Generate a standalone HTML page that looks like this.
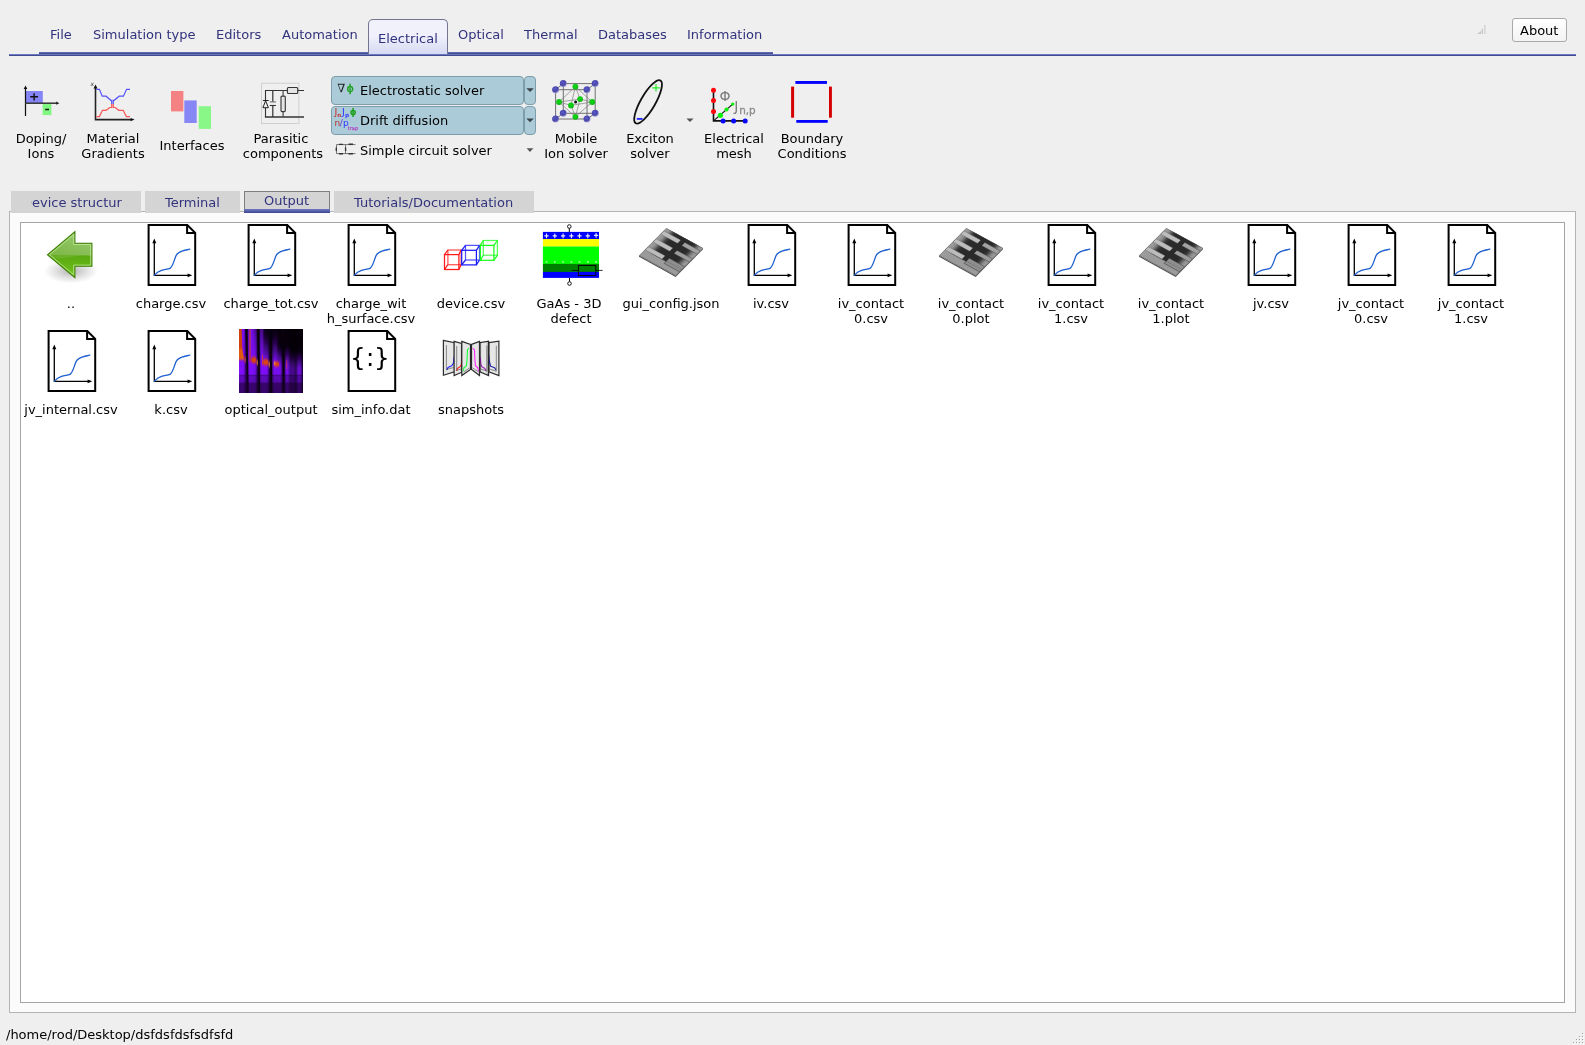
<!DOCTYPE html><html><head><meta charset="utf-8"><title>Simulation output</title><style>
html,body{margin:0;padding:0}
body{width:1585px;height:1045px;background:#efefef;position:relative;overflow:hidden;
 font-family:"DejaVu Sans","Liberation Sans",sans-serif;font-size:13px;color:#000;line-height:15px}
.a{position:absolute}
.t{position:absolute;white-space:nowrap;line-height:15px;will-change:transform}
.c{position:absolute;text-align:center;line-height:15px;white-space:nowrap;will-change:transform}
.rt{color:#32337d}
svg{position:absolute;overflow:visible;will-change:transform}
</style></head><body>
<div class="a" style="left:9px;top:54px;width:1567px;height:2px;background:linear-gradient(#6b77be 0,#6b77be 50%,#434b90 50%,#434b90 100%)"></div>
<div class="a" style="left:39px;top:52px;width:734px;height:2px;background:linear-gradient(#5e69b0 0,#5e69b0 50%,#464e93 50%,#464e93 100%)"></div>
<div class="t rt" style="left:50px;top:27px">File</div>
<div class="t rt" style="left:93px;top:27px">Simulation type</div>
<div class="t rt" style="left:216px;top:27px">Editors</div>
<div class="t rt" style="left:282px;top:27px">Automation</div>
<div class="t rt" style="left:458px;top:27px">Optical</div>
<div class="t rt" style="left:524px;top:27px">Thermal</div>
<div class="t rt" style="left:598px;top:27px">Databases</div>
<div class="t rt" style="left:687px;top:27px">Information</div>
<div class="a" style="left:368px;top:19px;width:78px;height:34px;border:1px solid #74748f;border-bottom:none;border-radius:5px 5px 0 0;background:linear-gradient(#f1f1fb 0%,#f1f1fd 45%,#d6d9f1 100%)"></div>
<div class="t rt" style="left:378px;top:31px">Electrical</div>
<div class="a" style="left:1512px;top:18px;width:53px;height:22px;border:1px solid #a9a9a9;border-radius:3px;background:linear-gradient(#ffffff,#f3f3f3)"></div>
<div class="t" style="left:1520px;top:23px">About</div>
<div class="c" style="left:-18.7px;width:120px;top:131px">Doping/</div>
<div class="c" style="left:-18.7px;width:120px;top:146px">Ions</div>
<div class="c" style="left:53.3px;width:120px;top:131px">Material</div>
<div class="c" style="left:53.3px;width:120px;top:146px">Gradients</div>
<div class="c" style="left:131.8px;width:120px;top:138px">Interfaces</div>
<div class="c" style="left:221.0px;width:120px;top:131px">Parasitic</div>
<div class="c" style="left:223.0px;width:120px;top:146px">components</div>
<div class="c" style="left:516.4px;width:120px;top:131px">Mobile</div>
<div class="c" style="left:516.4px;width:120px;top:146px">Ion solver</div>
<div class="c" style="left:589.7px;width:120px;top:131px">Exciton</div>
<div class="c" style="left:589.7px;width:120px;top:146px">solver</div>
<div class="c" style="left:673.6px;width:120px;top:131px">Electrical</div>
<div class="c" style="left:673.6px;width:120px;top:146px">mesh</div>
<div class="c" style="left:751.8px;width:120px;top:131px">Boundary</div>
<div class="c" style="left:751.8px;width:120px;top:146px">Conditions</div>
<div class="a" style="left:331px;top:76px;width:191px;height:27px;border:1px solid #7d9daa;border-radius:4px;background:#accbd8"></div>
<div class="a" style="left:524px;top:76px;width:10px;height:27px;border:1px solid #7d9daa;border-radius:4px;background:#accbd8"></div>
<div class="a" style="left:331px;top:106px;width:191px;height:27px;border:1px solid #7d9daa;border-radius:4px;background:#accbd8"></div>
<div class="a" style="left:524px;top:106px;width:10px;height:27px;border:1px solid #7d9daa;border-radius:4px;background:#accbd8"></div>
<div class="t" style="left:360px;top:83px">Electrostatic solver</div>
<div class="t" style="left:360px;top:113px">Drift diffusion</div>
<div class="t" style="left:360px;top:143px">Simple circuit solver</div>
<div class="a" style="left:9px;top:211px;width:1565px;height:800px;border:1px solid #b4b4b4;background:#fbfbfb"></div>
<div class="a" style="left:20px;top:222px;width:1543px;height:779px;border:1px solid #a5a5a5;background:#fff"></div>
<div class="a" style="left:11px;top:191px;width:130px;height:22px;background:#d4d4d4"></div>
<div class="a" style="left:145px;top:191px;width:95px;height:22px;background:#d4d4d4"></div>
<div class="a" style="left:334px;top:191px;width:200px;height:22px;background:#d4d4d4"></div>
<div class="a" style="left:244px;top:191px;width:84px;height:21px;border:1px solid #7f7f7f;border-bottom:none;background:#d4d4d4"></div>
<div class="a" style="left:244px;top:209px;width:86px;height:4px;background:linear-gradient(#6f7bc3,#3b4390)"></div>
<div class="a rt" style="left:31px;top:195px;width:91px;height:16px;overflow:hidden"><div class="t" style="left:-9.5px;top:0">Device structure</div></div>
<div class="t rt" style="left:165px;top:195px">Terminal</div>
<div class="t rt" style="left:264px;top:193px">Output</div>
<div class="t rt" style="left:354px;top:195px">Tutorials/Documentation</div>
<div class="c" style="left:11px;width:120px;top:296px">..</div>
<div class="c" style="left:111px;width:120px;top:296px">charge.csv</div>
<div class="c" style="left:211px;width:120px;top:296px">charge_tot.csv</div>
<div class="c" style="left:311px;width:120px;top:296px">charge_wit</div>
<div class="c" style="left:311px;width:120px;top:311px">h_surface.csv</div>
<div class="c" style="left:411px;width:120px;top:296px">device.csv</div>
<div class="c" style="left:509px;width:120px;top:296px">GaAs - 3D</div>
<div class="c" style="left:511px;width:120px;top:311px">defect</div>
<div class="c" style="left:611px;width:120px;top:296px">gui_config.json</div>
<div class="c" style="left:711px;width:120px;top:296px">iv.csv</div>
<div class="c" style="left:811px;width:120px;top:296px">iv_contact</div>
<div class="c" style="left:811px;width:120px;top:311px">0.csv</div>
<div class="c" style="left:911px;width:120px;top:296px">iv_contact</div>
<div class="c" style="left:911px;width:120px;top:311px">0.plot</div>
<div class="c" style="left:1011px;width:120px;top:296px">iv_contact</div>
<div class="c" style="left:1011px;width:120px;top:311px">1.csv</div>
<div class="c" style="left:1111px;width:120px;top:296px">iv_contact</div>
<div class="c" style="left:1111px;width:120px;top:311px">1.plot</div>
<div class="c" style="left:1211px;width:120px;top:296px">jv.csv</div>
<div class="c" style="left:1311px;width:120px;top:296px">jv_contact</div>
<div class="c" style="left:1311px;width:120px;top:311px">0.csv</div>
<div class="c" style="left:1411px;width:120px;top:296px">jv_contact</div>
<div class="c" style="left:1411px;width:120px;top:311px">1.csv</div>
<div class="c" style="left:11px;width:120px;top:402px">jv_internal.csv</div>
<div class="c" style="left:111px;width:120px;top:402px">k.csv</div>
<div class="c" style="left:211px;width:120px;top:402px">optical_output</div>
<div class="c" style="left:311px;width:120px;top:402px">sim_info.dat</div>
<div class="c" style="left:411px;width:120px;top:402px">snapshots</div>
<svg class="a" style="left:38px;top:223px" width="64" height="64" viewBox="0 0 64 64" ><defs><radialGradient id="bsh" cx="0.5" cy="0.5" r="0.5"><stop offset="0" stop-color="#000" stop-opacity="0.30"/><stop offset="0.55" stop-color="#000" stop-opacity="0.12"/><stop offset="1" stop-color="#000" stop-opacity="0"/></radialGradient><linearGradient id="bgr" x1="0" y1="0" x2="0" y2="1"><stop offset="0" stop-color="#86c258"/><stop offset="0.5" stop-color="#73b238"/><stop offset="0.52" stop-color="#5ba812"/><stop offset="1" stop-color="#70c41c"/></linearGradient><linearGradient id="bhl" x1="0" y1="0" x2="1" y2="0"><stop offset="0" stop-color="#fff" stop-opacity="0.06"/><stop offset="1" stop-color="#fff" stop-opacity="0.16"/></linearGradient></defs><ellipse cx="33" cy="48" rx="27" ry="12.5" fill="url(#bsh)"/><path d="M9.4 31.8L36.9 8.7V20.3H53.9V43.3H36.9V54.6Z" fill="url(#bgr)" stroke="#3a7d04" stroke-width="1.1" stroke-linejoin="miter"/><path d="M10.5 31.8L36.2 10.4V21H53.2V33.2C40 30.5 28 36.5 14.5 35.2Z" fill="url(#bhl)"/><path d="M11.6 31.8L35.7 11.6V21.5H52.7V42.1H35.7V51.7Z" fill="none" stroke="#c8eaa0" stroke-opacity="0.75" stroke-width="1"/></svg>
<svg class="a" style="left:138px;top:223px" width="64" height="64" viewBox="0 0 64 64" ><path d="M10.6 2H49.3L57.2 9.9V62H10.6Z" fill="#fff" stroke="#000" stroke-width="2" stroke-linejoin="miter"/><path d="M49.1 2V9.9H57.2" fill="none" stroke="#000" stroke-width="2"/><path d="M16.3 18.5V52.3H51" fill="none" stroke="#000" stroke-width="1.3"/><path d="M16.3 15.4L18.3 20.3H14.3Z M54.3 52.3L49.6 54.2V50.4Z" fill="#000"/><path d="M16.5 52.2C18.5 49.5 20.5 48.2 23.5 47.3C27 46.3 30 46.3 32 45.3C34.5 44 35.5 39 38 32.8C39.5 29.5 42 28.8 45 27.8C47.5 27 50 26.7 51.8 26.2" fill="none" stroke="#1d5fd1" stroke-width="1.3" stroke-linecap="round"/></svg>
<svg class="a" style="left:238px;top:223px" width="64" height="64" viewBox="0 0 64 64" ><path d="M10.6 2H49.3L57.2 9.9V62H10.6Z" fill="#fff" stroke="#000" stroke-width="2" stroke-linejoin="miter"/><path d="M49.1 2V9.9H57.2" fill="none" stroke="#000" stroke-width="2"/><path d="M16.3 18.5V52.3H51" fill="none" stroke="#000" stroke-width="1.3"/><path d="M16.3 15.4L18.3 20.3H14.3Z M54.3 52.3L49.6 54.2V50.4Z" fill="#000"/><path d="M16.5 52.2C18.5 49.5 20.5 48.2 23.5 47.3C27 46.3 30 46.3 32 45.3C34.5 44 35.5 39 38 32.8C39.5 29.5 42 28.8 45 27.8C47.5 27 50 26.7 51.8 26.2" fill="none" stroke="#1d5fd1" stroke-width="1.3" stroke-linecap="round"/></svg>
<svg class="a" style="left:338px;top:223px" width="64" height="64" viewBox="0 0 64 64" ><path d="M10.6 2H49.3L57.2 9.9V62H10.6Z" fill="#fff" stroke="#000" stroke-width="2" stroke-linejoin="miter"/><path d="M49.1 2V9.9H57.2" fill="none" stroke="#000" stroke-width="2"/><path d="M16.3 18.5V52.3H51" fill="none" stroke="#000" stroke-width="1.3"/><path d="M16.3 15.4L18.3 20.3H14.3Z M54.3 52.3L49.6 54.2V50.4Z" fill="#000"/><path d="M16.5 52.2C18.5 49.5 20.5 48.2 23.5 47.3C27 46.3 30 46.3 32 45.3C34.5 44 35.5 39 38 32.8C39.5 29.5 42 28.8 45 27.8C47.5 27 50 26.7 51.8 26.2" fill="none" stroke="#1d5fd1" stroke-width="1.3" stroke-linecap="round"/></svg>
<svg class="a" style="left:439px;top:223px" width="64" height="64" viewBox="0 0 64 64" ><g fill="none" stroke="#ff1a1a" stroke-width="1.25"><rect x="5.5" y="31.6" width="14.399999999999999" height="14.899999999999999"/><rect x="8.9" y="27" width="13.200000000000001" height="14.700000000000003" stroke-opacity="0.75"/><path d="M5.5 31.6L8.9 27"/><path d="M19.9 31.6L22.1 27"/><path d="M5.5 46.5L8.9 41.7"/><path d="M19.9 46.5L22.1 41.7"/></g><g fill="none" stroke="#1a1aff" stroke-width="1.25"><rect x="22.7" y="27.3" width="14.7" height="14.599999999999998"/><rect x="26.5" y="22.4" width="14.0" height="14.600000000000001" stroke-opacity="0.75"/><path d="M22.7 27.3L26.5 22.4"/><path d="M37.4 27.3L40.5 22.4"/><path d="M22.7 41.9L26.5 37"/><path d="M37.4 41.9L40.5 37"/></g><g fill="none" stroke="#1aff1a" stroke-width="1.25"><rect x="41.4" y="22.4" width="13.5" height="14.899999999999999"/><rect x="44.3" y="17.5" width="14.100000000000001" height="14.700000000000003" stroke-opacity="0.75"/><path d="M41.4 22.4L44.3 17.5"/><path d="M54.9 22.4L58.4 17.5"/><path d="M41.4 37.3L44.3 32.2"/><path d="M54.9 37.3L58.4 32.2"/></g></svg>
<svg class="a" style="left:539px;top:223px" width="64" height="64" viewBox="0 0 64 64" ><rect x="3.9" y="8.9" width="56.1" height="7.3" fill="#0000ff"/><rect x="3.9" y="16.0" width="56.1" height="7.7" fill="#ffff00"/><rect x="3.9" y="23.5" width="56.1" height="17.5" fill="#00ff00"/><rect x="3.9" y="40.9" width="56.1" height="8.1" fill="#008000"/><rect x="3.9" y="48.9" width="56.1" height="6.0" fill="#0000ff"/><path d="M5.4 12.9h4.2M7.5 10.6v4.6" stroke="#fff" stroke-width="1.1" stroke-opacity="0.92"/><rect x="6.7" y="38.3" width="1.6" height="1.3" fill="#fff" fill-opacity="0.85"/><path d="M13.7 12.9h4.2M15.8 10.6v4.6" stroke="#fff" stroke-width="1.1" stroke-opacity="0.92"/><rect x="15.0" y="38.3" width="1.6" height="1.3" fill="#fff" fill-opacity="0.85"/><path d="M22.0 12.9h4.2M24.1 10.6v4.6" stroke="#fff" stroke-width="1.1" stroke-opacity="0.92"/><rect x="23.3" y="38.3" width="1.6" height="1.3" fill="#fff" fill-opacity="0.85"/><path d="M30.3 12.9h4.2M32.4 10.6v4.6" stroke="#fff" stroke-width="1.1" stroke-opacity="0.92"/><rect x="31.6" y="38.3" width="1.6" height="1.3" fill="#fff" fill-opacity="0.85"/><path d="M38.4 12.9h4.2M40.5 10.6v4.6" stroke="#fff" stroke-width="1.1" stroke-opacity="0.92"/><rect x="39.7" y="38.3" width="1.6" height="1.3" fill="#fff" fill-opacity="0.85"/><path d="M46.7 12.9h4.2M48.8 10.6v4.6" stroke="#fff" stroke-width="1.1" stroke-opacity="0.92"/><rect x="48.0" y="38.3" width="1.6" height="1.3" fill="#fff" fill-opacity="0.85"/><path d="M55.0 12.4h4.2M57.1 10.1v4.6" stroke="#fff" stroke-width="1.1" stroke-opacity="0.92"/><rect x="56.3" y="38.3" width="1.6" height="1.3" fill="#fff" fill-opacity="0.85"/><circle cx="30.3" cy="3.5" r="1.8" fill="#fff" stroke="#000" stroke-width="0.9"/><path d="M30.3 5.4V9.0" stroke="#000" stroke-width="1"/><circle cx="30.5" cy="60.5" r="1.8" fill="#fff" stroke="#000" stroke-width="0.9"/><path d="M30.5 55.0V58.6" stroke="#000" stroke-width="1"/><rect x="39.4" y="42.5" width="17.4" height="10" fill="none" stroke="#000" stroke-width="0.9"/><path d="M32.5 47.4H39.4M56.8 47.4H63.6" stroke="#000" stroke-width="0.8"/></svg>
<svg class="a" style="left:639px;top:223px" width="64" height="64" viewBox="0 0 64 64" ><defs><filter id="cb1" x="-0.2" y="-0.2" width="1.4" height="1.4"><feGaussianBlur stdDeviation="0.05 0.004"/></filter><clipPath id="cc1"><rect x="0" y="0" width="1" height="1"/></clipPath></defs><path d="M-0.0 32.5L36.7 52.7L64.0 25.1v1.2L36.7 54.0L-0.0 33.7Z" fill="#505050"/><g transform="matrix(36.7 20.2 -27.3 27.6 27.3 4.9)"><g clip-path="url(#cc1)"><rect x="0" y="0" width="1" height="1" fill="#9b9b9b"/><rect x="0.17" y="-0.05" width="0.69" height="0.845" fill="#2c2c2c" filter="url(#cb1)"/><rect x="0.012" y="0.101" width="0.455" height="0.118" rx="0.014" fill="#bcbcbc" stroke="#555" stroke-width="0.008"/><rect x="0.012" y="0.386" width="0.455" height="0.118" rx="0.014" fill="#bcbcbc" stroke="#555" stroke-width="0.008"/><rect x="0.012" y="0.671" width="0.455" height="0.118" rx="0.014" fill="#bcbcbc" stroke="#555" stroke-width="0.008"/><rect x="0.585" y="0.10300000000000001" width="0.43" height="0.114" fill="#a2a2a2"/><path d="M0.585 0.10300000000000001H1M0.585 0.217H1" stroke="#3a3a3a" stroke-width="0.01" fill="none"/><rect x="0.585" y="0.388" width="0.43" height="0.114" fill="#9c9c9c"/><path d="M0.585 0.388H1M0.585 0.502H1" stroke="#3a3a3a" stroke-width="0.01" fill="none"/><rect x="0.585" y="0.673" width="0.43" height="0.114" fill="#8e8e8e"/><path d="M0.585 0.673H1M0.585 0.787H1" stroke="#3a3a3a" stroke-width="0.01" fill="none"/><rect x="0.58" y="0.78" width="0.44" height="0.08" fill="#8e8e8e"/><path d="M0.58 0.86V0.775M0.58 0.86H1" stroke="#3a3a3a" stroke-width="0.012" fill="none"/><rect x="0" y="0" width="1" height="1" fill="none" stroke="#4a4a4a" stroke-width="0.02"/></g></g></svg>
<svg class="a" style="left:738px;top:223px" width="64" height="64" viewBox="0 0 64 64" ><path d="M10.6 2H49.3L57.2 9.9V62H10.6Z" fill="#fff" stroke="#000" stroke-width="2" stroke-linejoin="miter"/><path d="M49.1 2V9.9H57.2" fill="none" stroke="#000" stroke-width="2"/><path d="M16.3 18.5V52.3H51" fill="none" stroke="#000" stroke-width="1.3"/><path d="M16.3 15.4L18.3 20.3H14.3Z M54.3 52.3L49.6 54.2V50.4Z" fill="#000"/><path d="M16.5 52.2C18.5 49.5 20.5 48.2 23.5 47.3C27 46.3 30 46.3 32 45.3C34.5 44 35.5 39 38 32.8C39.5 29.5 42 28.8 45 27.8C47.5 27 50 26.7 51.8 26.2" fill="none" stroke="#1d5fd1" stroke-width="1.3" stroke-linecap="round"/></svg>
<svg class="a" style="left:838px;top:223px" width="64" height="64" viewBox="0 0 64 64" ><path d="M10.6 2H49.3L57.2 9.9V62H10.6Z" fill="#fff" stroke="#000" stroke-width="2" stroke-linejoin="miter"/><path d="M49.1 2V9.9H57.2" fill="none" stroke="#000" stroke-width="2"/><path d="M16.3 18.5V52.3H51" fill="none" stroke="#000" stroke-width="1.3"/><path d="M16.3 15.4L18.3 20.3H14.3Z M54.3 52.3L49.6 54.2V50.4Z" fill="#000"/><path d="M16.5 52.2C18.5 49.5 20.5 48.2 23.5 47.3C27 46.3 30 46.3 32 45.3C34.5 44 35.5 39 38 32.8C39.5 29.5 42 28.8 45 27.8C47.5 27 50 26.7 51.8 26.2" fill="none" stroke="#1d5fd1" stroke-width="1.3" stroke-linecap="round"/></svg>
<svg class="a" style="left:939px;top:223px" width="64" height="64" viewBox="0 0 64 64" ><defs><filter id="cb2" x="-0.2" y="-0.2" width="1.4" height="1.4"><feGaussianBlur stdDeviation="0.05 0.004"/></filter><clipPath id="cc2"><rect x="0" y="0" width="1" height="1"/></clipPath></defs><path d="M-0.0 32.5L36.7 52.7L64.0 25.1v1.2L36.7 54.0L-0.0 33.7Z" fill="#505050"/><g transform="matrix(36.7 20.2 -27.3 27.6 27.3 4.9)"><g clip-path="url(#cc2)"><rect x="0" y="0" width="1" height="1" fill="#9b9b9b"/><rect x="0.17" y="-0.05" width="0.69" height="0.845" fill="#2c2c2c" filter="url(#cb2)"/><rect x="0.012" y="0.101" width="0.455" height="0.118" rx="0.014" fill="#bcbcbc" stroke="#555" stroke-width="0.008"/><rect x="0.012" y="0.386" width="0.455" height="0.118" rx="0.014" fill="#bcbcbc" stroke="#555" stroke-width="0.008"/><rect x="0.012" y="0.671" width="0.455" height="0.118" rx="0.014" fill="#bcbcbc" stroke="#555" stroke-width="0.008"/><rect x="0.585" y="0.10300000000000001" width="0.43" height="0.114" fill="#a2a2a2"/><path d="M0.585 0.10300000000000001H1M0.585 0.217H1" stroke="#3a3a3a" stroke-width="0.01" fill="none"/><rect x="0.585" y="0.388" width="0.43" height="0.114" fill="#9c9c9c"/><path d="M0.585 0.388H1M0.585 0.502H1" stroke="#3a3a3a" stroke-width="0.01" fill="none"/><rect x="0.585" y="0.673" width="0.43" height="0.114" fill="#8e8e8e"/><path d="M0.585 0.673H1M0.585 0.787H1" stroke="#3a3a3a" stroke-width="0.01" fill="none"/><rect x="0.58" y="0.78" width="0.44" height="0.08" fill="#8e8e8e"/><path d="M0.58 0.86V0.775M0.58 0.86H1" stroke="#3a3a3a" stroke-width="0.012" fill="none"/><rect x="0" y="0" width="1" height="1" fill="none" stroke="#4a4a4a" stroke-width="0.02"/></g></g></svg>
<svg class="a" style="left:1038px;top:223px" width="64" height="64" viewBox="0 0 64 64" ><path d="M10.6 2H49.3L57.2 9.9V62H10.6Z" fill="#fff" stroke="#000" stroke-width="2" stroke-linejoin="miter"/><path d="M49.1 2V9.9H57.2" fill="none" stroke="#000" stroke-width="2"/><path d="M16.3 18.5V52.3H51" fill="none" stroke="#000" stroke-width="1.3"/><path d="M16.3 15.4L18.3 20.3H14.3Z M54.3 52.3L49.6 54.2V50.4Z" fill="#000"/><path d="M16.5 52.2C18.5 49.5 20.5 48.2 23.5 47.3C27 46.3 30 46.3 32 45.3C34.5 44 35.5 39 38 32.8C39.5 29.5 42 28.8 45 27.8C47.5 27 50 26.7 51.8 26.2" fill="none" stroke="#1d5fd1" stroke-width="1.3" stroke-linecap="round"/></svg>
<svg class="a" style="left:1139px;top:223px" width="64" height="64" viewBox="0 0 64 64" ><defs><filter id="cb3" x="-0.2" y="-0.2" width="1.4" height="1.4"><feGaussianBlur stdDeviation="0.05 0.004"/></filter><clipPath id="cc3"><rect x="0" y="0" width="1" height="1"/></clipPath></defs><path d="M-0.0 32.5L36.7 52.7L64.0 25.1v1.2L36.7 54.0L-0.0 33.7Z" fill="#505050"/><g transform="matrix(36.7 20.2 -27.3 27.6 27.3 4.9)"><g clip-path="url(#cc3)"><rect x="0" y="0" width="1" height="1" fill="#9b9b9b"/><rect x="0.17" y="-0.05" width="0.69" height="0.845" fill="#2c2c2c" filter="url(#cb3)"/><rect x="0.012" y="0.101" width="0.455" height="0.118" rx="0.014" fill="#bcbcbc" stroke="#555" stroke-width="0.008"/><rect x="0.012" y="0.386" width="0.455" height="0.118" rx="0.014" fill="#bcbcbc" stroke="#555" stroke-width="0.008"/><rect x="0.012" y="0.671" width="0.455" height="0.118" rx="0.014" fill="#bcbcbc" stroke="#555" stroke-width="0.008"/><rect x="0.585" y="0.10300000000000001" width="0.43" height="0.114" fill="#a2a2a2"/><path d="M0.585 0.10300000000000001H1M0.585 0.217H1" stroke="#3a3a3a" stroke-width="0.01" fill="none"/><rect x="0.585" y="0.388" width="0.43" height="0.114" fill="#9c9c9c"/><path d="M0.585 0.388H1M0.585 0.502H1" stroke="#3a3a3a" stroke-width="0.01" fill="none"/><rect x="0.585" y="0.673" width="0.43" height="0.114" fill="#8e8e8e"/><path d="M0.585 0.673H1M0.585 0.787H1" stroke="#3a3a3a" stroke-width="0.01" fill="none"/><rect x="0.58" y="0.78" width="0.44" height="0.08" fill="#8e8e8e"/><path d="M0.58 0.86V0.775M0.58 0.86H1" stroke="#3a3a3a" stroke-width="0.012" fill="none"/><rect x="0" y="0" width="1" height="1" fill="none" stroke="#4a4a4a" stroke-width="0.02"/></g></g></svg>
<svg class="a" style="left:1238px;top:223px" width="64" height="64" viewBox="0 0 64 64" ><path d="M10.6 2H49.3L57.2 9.9V62H10.6Z" fill="#fff" stroke="#000" stroke-width="2" stroke-linejoin="miter"/><path d="M49.1 2V9.9H57.2" fill="none" stroke="#000" stroke-width="2"/><path d="M16.3 18.5V52.3H51" fill="none" stroke="#000" stroke-width="1.3"/><path d="M16.3 15.4L18.3 20.3H14.3Z M54.3 52.3L49.6 54.2V50.4Z" fill="#000"/><path d="M16.5 52.2C18.5 49.5 20.5 48.2 23.5 47.3C27 46.3 30 46.3 32 45.3C34.5 44 35.5 39 38 32.8C39.5 29.5 42 28.8 45 27.8C47.5 27 50 26.7 51.8 26.2" fill="none" stroke="#1d5fd1" stroke-width="1.3" stroke-linecap="round"/></svg>
<svg class="a" style="left:1338px;top:223px" width="64" height="64" viewBox="0 0 64 64" ><path d="M10.6 2H49.3L57.2 9.9V62H10.6Z" fill="#fff" stroke="#000" stroke-width="2" stroke-linejoin="miter"/><path d="M49.1 2V9.9H57.2" fill="none" stroke="#000" stroke-width="2"/><path d="M16.3 18.5V52.3H51" fill="none" stroke="#000" stroke-width="1.3"/><path d="M16.3 15.4L18.3 20.3H14.3Z M54.3 52.3L49.6 54.2V50.4Z" fill="#000"/><path d="M16.5 52.2C18.5 49.5 20.5 48.2 23.5 47.3C27 46.3 30 46.3 32 45.3C34.5 44 35.5 39 38 32.8C39.5 29.5 42 28.8 45 27.8C47.5 27 50 26.7 51.8 26.2" fill="none" stroke="#1d5fd1" stroke-width="1.3" stroke-linecap="round"/></svg>
<svg class="a" style="left:1438px;top:223px" width="64" height="64" viewBox="0 0 64 64" ><path d="M10.6 2H49.3L57.2 9.9V62H10.6Z" fill="#fff" stroke="#000" stroke-width="2" stroke-linejoin="miter"/><path d="M49.1 2V9.9H57.2" fill="none" stroke="#000" stroke-width="2"/><path d="M16.3 18.5V52.3H51" fill="none" stroke="#000" stroke-width="1.3"/><path d="M16.3 15.4L18.3 20.3H14.3Z M54.3 52.3L49.6 54.2V50.4Z" fill="#000"/><path d="M16.5 52.2C18.5 49.5 20.5 48.2 23.5 47.3C27 46.3 30 46.3 32 45.3C34.5 44 35.5 39 38 32.8C39.5 29.5 42 28.8 45 27.8C47.5 27 50 26.7 51.8 26.2" fill="none" stroke="#1d5fd1" stroke-width="1.3" stroke-linecap="round"/></svg>
<svg class="a" style="left:38px;top:329px" width="64" height="64" viewBox="0 0 64 64" ><path d="M10.6 2H49.3L57.2 9.9V62H10.6Z" fill="#fff" stroke="#000" stroke-width="2" stroke-linejoin="miter"/><path d="M49.1 2V9.9H57.2" fill="none" stroke="#000" stroke-width="2"/><path d="M16.3 18.5V52.3H51" fill="none" stroke="#000" stroke-width="1.3"/><path d="M16.3 15.4L18.3 20.3H14.3Z M54.3 52.3L49.6 54.2V50.4Z" fill="#000"/><path d="M16.5 52.2C18.5 49.5 20.5 48.2 23.5 47.3C27 46.3 30 46.3 32 45.3C34.5 44 35.5 39 38 32.8C39.5 29.5 42 28.8 45 27.8C47.5 27 50 26.7 51.8 26.2" fill="none" stroke="#1d5fd1" stroke-width="1.3" stroke-linecap="round"/></svg>
<svg class="a" style="left:138px;top:329px" width="64" height="64" viewBox="0 0 64 64" ><path d="M10.6 2H49.3L57.2 9.9V62H10.6Z" fill="#fff" stroke="#000" stroke-width="2" stroke-linejoin="miter"/><path d="M49.1 2V9.9H57.2" fill="none" stroke="#000" stroke-width="2"/><path d="M16.3 18.5V52.3H51" fill="none" stroke="#000" stroke-width="1.3"/><path d="M16.3 15.4L18.3 20.3H14.3Z M54.3 52.3L49.6 54.2V50.4Z" fill="#000"/><path d="M16.5 52.2C18.5 49.5 20.5 48.2 23.5 47.3C27 46.3 30 46.3 32 45.3C34.5 44 35.5 39 38 32.8C39.5 29.5 42 28.8 45 27.8C47.5 27 50 26.7 51.8 26.2" fill="none" stroke="#1d5fd1" stroke-width="1.3" stroke-linecap="round"/></svg>
<svg class="a" style="left:239px;top:329px" width="64" height="64" viewBox="0 0 64 64" ><defs><filter id="ob1" x="-0.3" y="-0.1" width="1.6" height="1.2"><feGaussianBlur stdDeviation="0.9 1.6"/></filter><filter id="ob2" x="-0.5" y="-0.5" width="2" height="2"><feGaussianBlur stdDeviation="0.7 0.9"/></filter><filter id="ob3" x="-0.5" y="-0.2" width="2" height="1.4"><feGaussianBlur stdDeviation="0.45 0.8"/></filter><linearGradient id="ovA" x1="0" y1="0" x2="0" y2="1"><stop offset="0" stop-color="#8010ff" stop-opacity="0.95"/><stop offset="0.7" stop-color="#8010ff" stop-opacity="1"/><stop offset="1" stop-color="#8010ff" stop-opacity="0.9"/></linearGradient><linearGradient id="ovB" x1="0" y1="0" x2="0" y2="1"><stop offset="0" stop-color="#8010ff" stop-opacity="0.55"/><stop offset="0.25" stop-color="#8010ff" stop-opacity="0.85"/><stop offset="0.5" stop-color="#8010ff" stop-opacity="1"/><stop offset="1" stop-color="#8010ff" stop-opacity="0.9"/></linearGradient><linearGradient id="ovC" x1="0" y1="0" x2="0" y2="1"><stop offset="0" stop-color="#8010ff" stop-opacity="0.0"/><stop offset="0.15" stop-color="#8010ff" stop-opacity="0.1"/><stop offset="0.38" stop-color="#8010ff" stop-opacity="0.6"/><stop offset="0.52" stop-color="#8010ff" stop-opacity="1"/><stop offset="0.7" stop-color="#8010ff" stop-opacity="0.95"/><stop offset="1" stop-color="#8010ff" stop-opacity="0.85"/></linearGradient><linearGradient id="ovD" x1="0" y1="0" x2="0" y2="1"><stop offset="0" stop-color="#8010ff" stop-opacity="0.0"/><stop offset="0.3" stop-color="#8010ff" stop-opacity="0.03"/><stop offset="0.45" stop-color="#8010ff" stop-opacity="0.5"/><stop offset="0.56" stop-color="#8010ff" stop-opacity="0.95"/><stop offset="0.7" stop-color="#8010ff" stop-opacity="0.95"/><stop offset="1" stop-color="#8010ff" stop-opacity="0.85"/></linearGradient><linearGradient id="ovE" x1="0" y1="0" x2="0" y2="1"><stop offset="0" stop-color="#8010ff" stop-opacity="0.0"/><stop offset="0.36" stop-color="#8010ff" stop-opacity="0.0"/><stop offset="0.5" stop-color="#8010ff" stop-opacity="0.45"/><stop offset="0.6" stop-color="#8010ff" stop-opacity="0.85"/><stop offset="0.72" stop-color="#8010ff" stop-opacity="0.85"/><stop offset="1" stop-color="#8010ff" stop-opacity="0.8"/></linearGradient><clipPath id="ocl"><rect x="0" y="0" width="64" height="64"/></clipPath></defs><g clip-path="url(#ocl)"><rect width="64" height="64" fill="#050008"/><g filter="url(#ob1)"><rect x="-2" y="-4" width="8.3" height="72" fill="url(#ovA)"/><rect x="8.6" y="-4" width="5.8" height="72" fill="url(#ovA)"/><rect x="14.2" y="-4" width="3.6" height="72" fill="url(#ovB)"/><rect x="20.6" y="-4" width="3.6" height="72" fill="url(#ovB)"/><rect x="24" y="-4" width="5.8" height="72" fill="url(#ovC)"/><rect x="33.3" y="-4" width="5.2" height="72" fill="url(#ovC)"/><rect x="38.3" y="-4" width="4.6" height="72" fill="url(#ovD)"/><rect x="45.8" y="-4" width="5" height="72" fill="url(#ovD)"/><rect x="57.3" y="-4" width="5.6" height="72" fill="url(#ovE)"/><rect x="51.5" y="-4" width="4.5" height="72" fill="url(#ovE)"/></g><rect x="50.5" y="0" width="7" height="64" fill="#050008" fill-opacity="0.3" filter="url(#ob1)"/><g filter="url(#ob3)"><path d="M-1 -2H2.6L3.4 22L5.2 30.5H-1Z" fill="#d04008"/><path d="M-1 20H3.2L5 30.8H-1Z" fill="#e45a08"/><rect x="10.4" y="-2" width="1.2" height="35" fill="#c8302a"/><rect x="5.6" y="28" width="1" height="5.5" fill="#e05010"/><rect x="23" y="26" width="0.9" height="10" fill="#d84020"/><rect x="47.2" y="31" width="1" height="9" fill="#c03050" fill-opacity="0.85"/></g><g filter="url(#ob2)"><ellipse cx="14.8" cy="31" rx="2.6" ry="3.3" fill="#d84008"/><ellipse cx="26.8" cy="33.2" rx="2.7" ry="3.2" fill="#dc4408"/><ellipse cx="37.8" cy="35" rx="2.6" ry="2.6" fill="#e04a08"/><ellipse cx="18.2" cy="33.5" rx="0.55" ry="3" fill="#ff8a10"/><ellipse cx="30.2" cy="35.5" rx="0.55" ry="3.3" fill="#ff9410"/><ellipse cx="35.6" cy="34.3" rx="0.8" ry="1.8" fill="#ff9a18"/></g><g filter="url(#ob3)" fill="#0a0010"><path d="M6.3 -2H8.5L9.6 66H8.5Z"/><path d="M17.9 -2H20.3L21.2 66H20Z"/><path d="M30.3 -2H32.5L33.3 66H32.2Z"/><path d="M43.1 -2H45.3L45.5 66H44.3Z"/></g><rect x="0" y="45.8" width="64" height="0.9" fill="#18002c" fill-opacity="0.55"/><rect x="0" y="46.7" width="64" height="7" fill="#18002c" fill-opacity="0.3"/><rect x="0" y="53.6" width="64" height="11" fill="#14001e" fill-opacity="0.62"/></g></svg>
<svg class="a" style="left:338px;top:329px" width="64" height="64" viewBox="0 0 64 64" ><path d="M10.6 2H49.3L57.2 9.9V62H10.6Z" fill="#fff" stroke="#000" stroke-width="2"/><path d="M49.1 2V9.9H57.2" fill="none" stroke="#000" stroke-width="2"/><text x="12" y="36.5" font-family="DejaVu Sans,Liberation Sans,sans-serif" font-size="24.6" fill="#000">{</text><text x="28" y="37.1" font-family="DejaVu Sans,Liberation Sans,sans-serif" font-size="24.6" fill="#000">:</text><text x="36.1" y="36.5" font-family="DejaVu Sans,Liberation Sans,sans-serif" font-size="24.6" fill="#000">}</text></svg>
<svg class="a" style="left:439px;top:329px" width="64" height="64" viewBox="0 0 64 64" ><polygon points="4.4,11.4 15.4,13.7 15.4,42.9 4.4,46.2" fill="#e6e6e6" stroke="#2e2e2e" stroke-width="1.2" stroke-linejoin="miter"/><polyline points="7.7,40.9 9.0,38.5 12.7,36.8 14.4,34.2 15.1,27.5" fill="none" stroke="#2020ff" stroke-width="1.15" stroke-linejoin="round"/><polygon points="15.1,12.4 22.8,14.4 22.8,43.2 15.1,46.6" fill="#e6e6e6" stroke="#2e2e2e" stroke-width="1.2" stroke-linejoin="miter"/><polyline points="17.4,41.9 18.4,39.5 21.1,37.8 22.4,35.5 22.8,28.1" fill="none" stroke="#ff2020" stroke-width="1.15" stroke-linejoin="round"/><polygon points="22.8,12.4 31.5,15.4 31.5,40.5 22.8,46.6" fill="#e6e6e6" stroke="#2e2e2e" stroke-width="1.2" stroke-linejoin="miter"/><polyline points="24.4,42.2 24.9,38.8 27.5,36.8 28.1,29.5 28.5,20.8 29.8,19.1" fill="none" stroke="#20ff40" stroke-width="1.15" stroke-linejoin="round"/><polygon points="49.9,13.7 59.9,12.1 59.9,46.6 49.9,42.9" fill="#e6e6e6" stroke="#2e2e2e" stroke-width="1.2" stroke-linejoin="miter"/><polyline points="56.9,40.9 55.6,38.8 51.6,37.2 50.6,33.5 49.2,22.8" fill="none" stroke="#2020a0" stroke-width="1.15" stroke-linejoin="round"/><polygon points="40.9,13.7 49.6,12.1 49.6,46.6 40.9,42.9" fill="#e6e6e6" stroke="#2e2e2e" stroke-width="1.2" stroke-linejoin="miter"/><polyline points="46.9,41.9 45.9,39.5 42.9,37.8 41.9,35.5 41.2,28.1" fill="none" stroke="#a020c0" stroke-width="1.15" stroke-linejoin="round"/><polygon points="32.5,15.4 40.5,12.4 40.5,46.6 32.5,40.5" fill="#e6e6e6" stroke="#2e2e2e" stroke-width="1.2" stroke-linejoin="miter"/><polyline points="39.5,42.2 38.8,38.8 36.5,36.8 35.8,29.5 35.5,20.8 33.8,19.1" fill="none" stroke="#ff30ff" stroke-width="1.15" stroke-linejoin="round"/><polyline points="7.4,16.1 7.4,40.5 14.7,38.5" fill="none" stroke="#444" stroke-width="0.6"/><polyline points="17.7,17.1 17.7,41.5 22.4,39.9" fill="none" stroke="#444" stroke-width="0.6"/><polyline points="24.8,42.9 30.8,38.8" fill="none" stroke="#444" stroke-width="0.6"/><polyline points="33.5,38.8 39.5,42.9" fill="none" stroke="#444" stroke-width="0.6"/><polyline points="47.9,16.7 47.9,42.2 41.5,39.9" fill="none" stroke="#444" stroke-width="0.6"/><polyline points="57.3,16.7 57.3,42.2 50.2,39.9" fill="none" stroke="#444" stroke-width="0.6"/><polygon points="21.8,14.4 22.8,14.4 22.8,43.2 21.8,42.9" fill="#000" fill-opacity="0.25"/><polygon points="40.9,13.7 42.2,13.5 42.2,43.4 40.9,42.9" fill="#000" fill-opacity="0.22"/><polygon points="47.6,12.5 49.6,12.1 49.6,46.6 47.6,45.7" fill="#000" fill-opacity="0.2"/><polygon points="31.5,15.4 32.5,15.4 32.5,40.5 31.5,40.5" fill="#222"/></svg>
<svg class="a" style="left:0;top:0;pointer-events:none" width="1585" height="1045" viewBox="0 0 1585 1045"><defs><radialGradient id="sb" cx="0.4" cy="0.35" r="0.75"><stop offset="0" stop-color="#5a5ac8"/><stop offset="0.55" stop-color="#4a46a8"/><stop offset="1" stop-color="#c8c8e8"/></radialGradient><radialGradient id="sg" cx="0.45" cy="0.4" r="0.7"><stop offset="0" stop-color="#10d818"/><stop offset="0.7" stop-color="#0cc010"/><stop offset="1" stop-color="#089808"/></radialGradient></defs><rect x="26" y="91" width="16.8" height="12" fill="#8585f7"/><rect x="42.6" y="103.6" width="8.8" height="11.5" fill="#80f780"/><path d="M25.5 87.5V116" stroke="#111" stroke-width="1.25"/><path d="M25.5 85.4L27.3 89H23.7Z" fill="#111"/><path d="M25 103.2H57" stroke="#333" stroke-width="1.5"/><path d="M59.4 103.2L56.2 104.8V101.6Z" fill="#222"/><path d="M30.2 96.8H38M34.1 93.2V100.6" stroke="#111" stroke-width="1.4"/><path d="M45.2 109.5H49" stroke="#111" stroke-width="1.5"/><path d="M95.5 88V119.6H131" stroke="#222" stroke-width="1.6" fill="none"/><path d="M95.5 84.4L97.5 88.6H93.5Z M134.6 119.6L130.6 121.3V117.9Z" fill="#111"/><text x="90.6" y="86.2" font-family="DejaVu Sans,Liberation Sans,sans-serif" font-size="6" font-style="italic" fill="#333">x</text><path d="M96.3 89.3H99.4L102.2 96.2H106L110.8 100.3H111.7V103.9M113.3 103.9V100.3H114.2L119.2 96.2H123.4L126.6 89.3H130" fill="none" stroke="#5555f8" stroke-width="1.2"/><path d="M96.3 116.6H99.4L102.4 110.3H106L109.8 107.5H111.7V104.1M113.3 104.1V107.5H115.2L118.8 110.3H123.2L126.4 116.6H130" fill="none" stroke="#f85555" stroke-width="1.2"/><rect x="171" y="91" width="12.4" height="20.4" fill="#f58282"/><rect x="184.3" y="100.4" width="12.4" height="22.6" fill="#8686f5"/><rect x="198.7" y="106.2" width="12.3" height="22.7" fill="#88f788"/><rect x="261.5" y="83.2" width="37.4" height="40.3" fill="none" stroke="#cfcfcf" stroke-width="1"/><path d="M265.5 100.5V90.5H287.4M297.7 90.5H304M265.5 107.9V117.1" fill="none" stroke="#333" stroke-width="1.1"/><path d="M264.9 117.1H304" stroke="#333" stroke-width="1.5"/><rect x="287.4" y="87.5" width="10.3" height="6" rx="1" fill="#e4e4e4" stroke="#333" stroke-width="1.1"/><rect x="281" y="96.1" width="4.3" height="15.5" rx="1" fill="#e4e4e4" stroke="#333" stroke-width="1.1"/><path d="M283.1 90.5V96.1M283.1 111.6V117.1" stroke="#555" stroke-width="1.3"/><path d="M272.8 90.5V101.9M272.8 105.5V117.1" stroke="#333" stroke-width="1.2"/><path d="M269.8 101.9H275.9" stroke="#777" stroke-width="1.2"/><path d="M269.8 105.5H275.9" stroke="#333" stroke-width="1.1"/><path d="M262.9 100.5H268.7" stroke="#222" stroke-width="1"/><path d="M265.6 100.8L268.4 107.7H262.9Z" fill="#efefef" stroke="#222" stroke-width="1"/><path d="M526.3 88.3H533.8L530.05 92.1Z M526.3 118.4H533.8L530.05 122.2Z" fill="#3a474d"/><path d="M526.6 148.3H533.4L530 152.1Z M686.4 118.4H693.6L690 122.1Z" fill="#555"/><text x="337.2" y="92.3" font-family="DejaVu Serif,Liberation Serif,serif" font-style="italic" font-size="11.5" fill="#222">∇</text><text x="346.4" y="91.8" font-family="DejaVu Sans,Liberation Sans,sans-serif" font-size="11" fill="#18a018" stroke="#18a018" stroke-width="0.35">ϕ</text><text x="334.6" y="115.4" font-family="DejaVu Sans,Liberation Sans,sans-serif" font-size="9.5" fill="#c43030">J</text><text x="337.3" y="117.4" font-family="DejaVu Sans,Liberation Sans,sans-serif" font-size="5.6" font-weight="bold" fill="#c43030">n</text><text x="342" y="115.4" font-family="DejaVu Sans,Liberation Sans,sans-serif" font-size="9.5" fill="#3030ff">J</text><text x="344.9" y="117.4" font-family="DejaVu Sans,Liberation Sans,sans-serif" font-size="5.6" font-weight="bold" fill="#3030ff">p</text><text x="349.8" y="115.2" font-family="DejaVu Sans,Liberation Sans,sans-serif" font-weight="bold" font-size="8.5" fill="#18a018">ϕ</text><text x="334.4" y="126.2" font-family="DejaVu Sans,Liberation Sans,sans-serif" font-size="9" fill="#b83030">n</text><text x="339.8" y="126.2" font-family="DejaVu Sans,Liberation Sans,sans-serif" font-size="9" fill="#6a38c8">/</text><text x="343" y="126.2" font-family="DejaVu Sans,Liberation Sans,sans-serif" font-size="9" fill="#3030ff">p</text><text x="347.8" y="129.6" font-family="DejaVu Sans,Liberation Sans,sans-serif" font-size="5" fill="#b030c0" stroke="#b030c0" stroke-width="0.15">trap</text><path d="M336.5 144.6H355.5M336.5 153.6H355.5M336.5 144.6V153.6M345.5 144.6V153.6" fill="none" stroke="#555" stroke-width="0.8"/><path d="M339 144.4H343M348.5 144.2H353M339 153.7H343M348.5 153.7H353M336.3 147.5V151M345.6 147.5V151" stroke="#333" stroke-width="1.4"/><g fill="none" stroke="#707070" stroke-width="1"><path d="M555.6 89.7H587V119H555.6Z M563.3 83.6H595.2V113.3H563.3Z"/><path d="M555.6 89.7L563.3 83.6"/><path d="M587 89.7L595.2 83.6"/><path d="M587 119L595.2 113.3"/><path d="M555.6 119L563.3 113.3"/></g><g fill="none" stroke="#808080" stroke-width="0.7"><path d="M575.4 86.6L559 102"/><path d="M575.4 86.6L592.2 102"/><path d="M575.4 86.6L571 105.4"/><path d="M575.4 86.6L580.1 99.1"/><path d="M575.4 116.8L559 102"/><path d="M575.4 116.8L592.2 102"/><path d="M575.4 116.8L571 105.4"/><path d="M575.4 116.8L580.1 99.1"/><path d="M559 102L571 105.4"/><path d="M571 105.4L592.2 102"/><path d="M592.2 102L580.1 99.1"/><path d="M580.1 99.1L559 102"/></g><circle cx="563.3" cy="83.6" r="3.5" fill="url(#sb)"/><circle cx="595.2" cy="83.6" r="3.5" fill="url(#sb)"/><circle cx="595.2" cy="113.3" r="3.5" fill="url(#sb)"/><circle cx="563.3" cy="113.3" r="3.5" fill="url(#sb)"/><circle cx="555.6" cy="89.7" r="3.5" fill="url(#sb)"/><circle cx="587" cy="89.7" r="3.5" fill="url(#sb)"/><circle cx="587" cy="119" r="3.5" fill="url(#sb)"/><circle cx="555.6" cy="119" r="3.5" fill="url(#sb)"/><circle cx="575.4" cy="86.6" r="2.9" fill="url(#sg)"/><circle cx="575.4" cy="116.8" r="2.9" fill="url(#sg)"/><circle cx="559" cy="102" r="2.9" fill="url(#sg)"/><circle cx="592.2" cy="102" r="2.9" fill="url(#sg)"/><circle cx="571" cy="105.4" r="2.9" fill="url(#sg)"/><circle cx="580.1" cy="99.1" r="2.9" fill="url(#sg)"/><circle cx="575.6" cy="102.1" r="1.5" fill="#111"/><ellipse cx="648.1" cy="101.85" rx="7.3" ry="24.7" transform="rotate(30 648.1 101.85)" fill="none" stroke="#111" stroke-width="1.8"/><path d="M652.2 87.8H659.8M656 84V91.6" stroke="#22ee22" stroke-width="1.2"/><path d="M636.8 118.9H642.6" stroke="#2828ff" stroke-width="1.9"/><path d="M713.5 90V120.9H745" fill="none" stroke="#111" stroke-width="1.6"/><path d="M713.8 120.6L732.7 104.1" stroke="#111" stroke-width="1.15"/><circle cx="713.5" cy="90.3" r="2.5" fill="#ff0808"/><circle cx="713.5" cy="100.4" r="2.5" fill="#ff0808"/><circle cx="713.5" cy="111.6" r="2.5" fill="#ff0808"/><circle cx="723.1" cy="120.9" r="2.5" fill="#0808ff"/><circle cx="733.6" cy="120.9" r="2.5" fill="#0808ff"/><circle cx="745.2" cy="120.9" r="2.5" fill="#0808ff"/><circle cx="720.4" cy="115.3" r="2.6" fill="#08f008"/><circle cx="726.5" cy="109.5" r="2.1" fill="#08f008"/><circle cx="732.7" cy="104.1" r="1.7" fill="#08f008"/><text x="719.6" y="100.6" font-family="DejaVu Sans,Liberation Sans,sans-serif" font-size="14" fill="#7c7c7c">Φ</text><text x="734.2" y="111.1" font-family="DejaVu Sans,Liberation Sans,sans-serif" font-size="14" fill="#7c7c7c">J</text><text x="739.2" y="113.5" font-family="DejaVu Sans,Liberation Sans,sans-serif" font-size="10.4" fill="#8a8a8a" stroke="#8a8a8a" stroke-width="0.3">n,p</text><rect x="795.4" y="81" width="31.6" height="2.9" fill="#0000ff"/><rect x="796.3" y="120" width="31.4" height="2.8" fill="#0000ff"/><rect x="791.1" y="86.6" width="3" height="31.1" fill="#d40000"/><rect x="829" y="86.6" width="2.9" height="31.1" fill="#d40000"/><g fill="#9a9a9a" fill-opacity="0.45"><rect x="1484.3" y="25" width="1.1" height="9"/><rect x="1481.6" y="28.8" width="1.4" height="5.2"/><path d="M1477 34L1481 31V34Z"/></g><rect x="1582" y="1033" width="1" height="1" fill="#a0a0a0"/><rect x="1583" y="1034" width="1" height="1" fill="#fff"/><rect x="1579" y="1036" width="1" height="1" fill="#a0a0a0"/><rect x="1580" y="1037" width="1" height="1" fill="#fff"/><rect x="1582" y="1036" width="1" height="1" fill="#a0a0a0"/><rect x="1583" y="1037" width="1" height="1" fill="#fff"/><rect x="1576" y="1039" width="1" height="1" fill="#a0a0a0"/><rect x="1577" y="1040" width="1" height="1" fill="#fff"/><rect x="1579" y="1039" width="1" height="1" fill="#a0a0a0"/><rect x="1580" y="1040" width="1" height="1" fill="#fff"/><rect x="1582" y="1039" width="1" height="1" fill="#a0a0a0"/><rect x="1583" y="1040" width="1" height="1" fill="#fff"/><rect x="1573" y="1042" width="1" height="1" fill="#a0a0a0"/><rect x="1574" y="1043" width="1" height="1" fill="#fff"/><rect x="1576" y="1042" width="1" height="1" fill="#a0a0a0"/><rect x="1577" y="1043" width="1" height="1" fill="#fff"/><rect x="1579" y="1042" width="1" height="1" fill="#a0a0a0"/><rect x="1580" y="1043" width="1" height="1" fill="#fff"/><rect x="1582" y="1042" width="1" height="1" fill="#a0a0a0"/><rect x="1583" y="1043" width="1" height="1" fill="#fff"/></svg>
<div class="t" style="left:6px;top:1027px">/home/rod/Desktop/dsfdsfdsfsdfsfd</div>
</body></html>
